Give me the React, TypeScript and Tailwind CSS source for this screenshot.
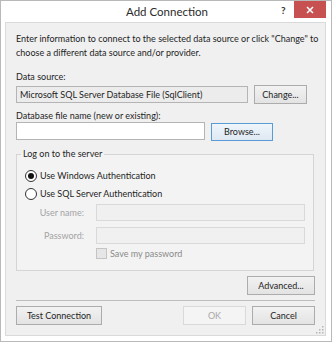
export default function App() {
  const btn =
    "h-[19px] flex items-center justify-center border border-[#acacac] bg-gradient-to-b from-[#f2f2f2] to-[#e3e3e3] text-[#1e1e1e] whitespace-nowrap";
  return (
    <div className="w-[332px] h-[342px] bg-white border border-[#b9b9b9] flex flex-col font-['Lato',sans-serif] text-[9px] leading-[14px] text-[#1e1e1e] whitespace-nowrap">
      {/* title bar */}
      <div className="h-[21px] flex items-start relative">
        <div className="flex-1 text-center text-[11.5px] leading-[22px] text-[#2b2b2b] pl-[2px]">Add Connection</div>
        <div className="absolute left-[280px] top-[2px] text-[10px] font-bold text-[#333]">?</div>
        <div className="absolute left-[293px] top-0 w-[32px] h-[17px] bg-[#c75050] flex items-center justify-center">
          <svg width="8" height="8" viewBox="0 0 8 8">
            <path d="M1 1L7 7M7 1L1 7" stroke="#fff" strokeWidth="1.5" />
          </svg>
        </div>
      </div>

      {/* client area */}
      <div className="flex-1 mx-[4px] mr-[5px] mb-[5px] bg-[#f0f0f0] border border-[#dadada] pt-[9px] pl-[10px] pr-[10px] flex flex-col relative">
        <p>
          Enter information to connect to the selected data source or click "Change" to
          <br />
          choose a different data source and/or provider.
        </p>

        <div className="mt-[10px]">Data source:</div>
        <div className="mt-[1px] h-[19px] flex items-center gap-[6px]">
          <div className="w-[232px] h-[17px] border border-[#b4b4b4] bg-[#ececec] pl-[3px] leading-[15px] text-[#1e1e1e]">
            Microsoft SQL Server Database File (SqlClient)
          </div>
          <div className={btn + " w-[53px]"}>Change...</div>
        </div>

        <div className="mt-[5px] h-[13px] leading-[13px]">Database file name (new or existing):</div>
        <div className="h-[19px] flex items-start gap-[6px]">
          <div className="w-[189px] h-[18px] border border-[#b4b4b4] bg-white" />
          <div className="mt-[1px] w-[62px] h-[18px] flex items-center justify-center border border-[#5b9bd5] bg-gradient-to-b from-[#eef5fb] to-[#dfe9f3]">
            Browse...
          </div>
        </div>

        {/* group box */}
        <fieldset className="mt-[6px] mr-[1px] border border-[#d5d5d5] bg-[#f3f3f3] pb-[10px]">
          <legend className="ml-[4px] px-[2px] leading-[14px]">Log on to the server</legend>
          <div className="pl-[8px] pt-[7px] flex items-center gap-[3px] h-[16px] box-content">
            <span className="w-[12px] h-[12px] rounded-full border border-[#333] bg-white flex items-center justify-center">
              <span className="w-[6px] h-[6px] rounded-full bg-[#111]" />
            </span>
            <span>Use Windows Authentication</span>
          </div>
          <div className="pl-[8px] mt-[2px] flex items-center gap-[3px] h-[16px]">
            <span className="w-[12px] h-[12px] rounded-full border border-[#333] bg-white" />
            <span>Use SQL Server Authentication</span>
          </div>
          <div className="mt-[2px] flex items-center gap-[12px]">
            <span className="w-[67px] text-right text-[#a3a3a3]">User name:</span>
            <span className="w-[209px] h-[17px] border border-[#d9d9d9] bg-[#f0f0f0]" />
          </div>
          <div className="mt-[6px] flex items-center gap-[12px]">
            <span className="w-[67px] text-right text-[#a3a3a3]">Password:</span>
            <span className="w-[209px] h-[17px] border border-[#d9d9d9] bg-[#f0f0f0]" />
          </div>
          <div className="mt-[3px] h-[13px] pl-[79px] flex items-center gap-[3px]">
            <span className="w-[11px] h-[11px] border border-[#c4c4c4] bg-[#e6e6e6]" />
            <span className="text-[#8a8a8a]">Save my password</span>
          </div>
        </fieldset>

        <div className="mt-[5px] flex justify-end">
          <div className={btn + " w-[68px]"}>Advanced...</div>
        </div>

        <div className="mt-[5px] h-px bg-[#bdbdbd]" />

        <div className="mt-[5px] flex items-center">
          <div className={btn + " w-[86px]"}>Test Connection</div>
          <div className="ml-auto w-[63px] h-[19px] flex items-center justify-center border border-[#d9d9d9] bg-[#f4f4f4] text-[#a8a8a8]">
            OK
          </div>
          <div className={btn + " ml-[6px] w-[63px]"}>Cancel</div>
        </div>

        {/* size grip */}
        <svg className="absolute right-[1px] bottom-[1px]" width="8" height="8" viewBox="0 0 8 8">
          <g fill="#b5b5b5">
            <rect x="6" y="0" width="1.5" height="1.5" />
            <rect x="3" y="3" width="1.5" height="1.5" />
            <rect x="6" y="3" width="1.5" height="1.5" />
            <rect x="0" y="6" width="1.5" height="1.5" />
            <rect x="3" y="6" width="1.5" height="1.5" />
            <rect x="6" y="6" width="1.5" height="1.5" />
          </g>
        </svg>
      </div>
    </div>
  );
}
